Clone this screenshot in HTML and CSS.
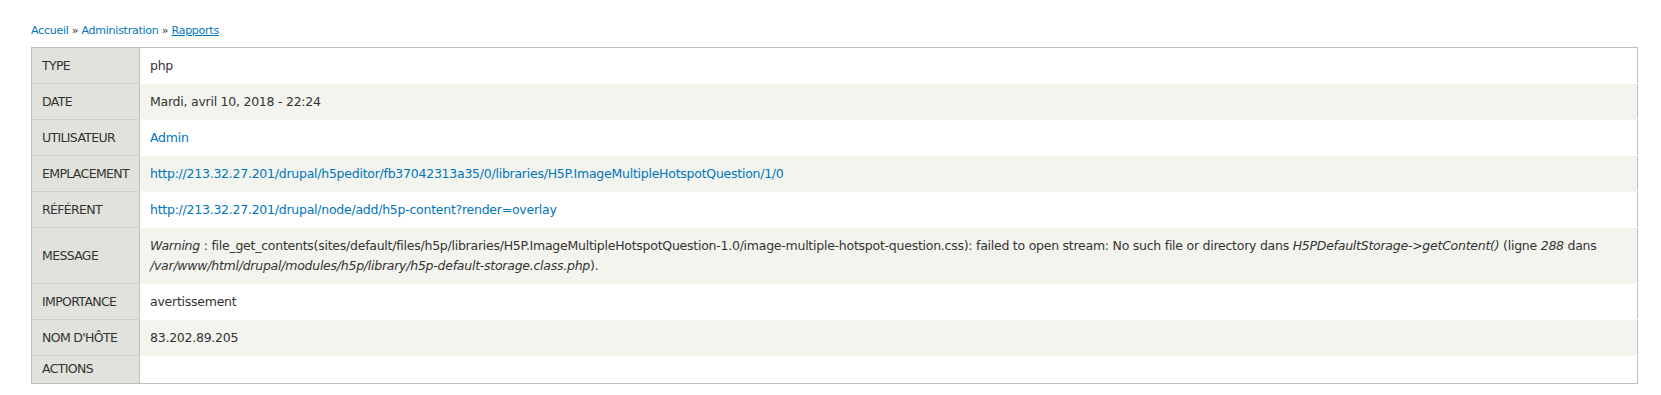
FILE: index.html
```html
<!doctype html>
<html lang="fr">
<head>
    <meta charset="utf-8">
    <title>Détails de l'événement</title>
    <link rel="stylesheet" href="styles.css">
</head>
<body>
<div class="page">

    <!-- fil d'ariane -->
    <div class="breadcrumb">
        <a href="#">Accueil</a> » <a href="#">Administration</a> » <a class="current" href="#">Rapports</a>
    </div>

    <!-- détails du message -->
    <table class="dblog-event">
        <tr>
            <th>TYPE</th>
            <td>php</td>
        </tr>
        <tr class="even">
            <th>DATE</th>
            <td>Mardi, avril 10, 2018 - 22:24</td>
        </tr>
        <tr>
            <th>UTILISATEUR</th>
            <td><a href="#">Admin</a></td>
        </tr>
        <tr class="even">
            <th>EMPLACEMENT</th>
            <td><a href="#">http://213.32.27.201/drupal/h5peditor/fb37042313a35/0/libraries/H5P.ImageMultipleHotspotQuestion/1/0</a></td>
        </tr>
        <tr>
            <th>RÉFÉRENT</th>
            <td><a href="#">http://213.32.27.201/drupal/node/add/h5p-content?render=overlay</a></td>
        </tr>
        <tr class="even">
            <th>MESSAGE</th>
            <td><em>Warning</em> : file_get_contents(sites/default/files/h5p/libraries/H5P.ImageMultipleHotspotQuestion-1.0/image-multiple-hotspot-question.css): failed to open stream: No such file or directory dans <em>H5PDefaultStorage-&gt;getContent()</em> (ligne <em>288</em> dans <em>/var/www/html/drupal/modules/h5p/library/h5p-default-storage.class.php</em>).</td>
        </tr>
        <tr>
            <th>IMPORTANCE</th>
            <td>avertissement</td>
        </tr>
        <tr class="even">
            <th>NOM D'HÔTE</th>
            <td>83.202.89.205</td>
        </tr>
        <tr class="last">
            <th>ACTIONS</th>
            <td></td>
        </tr>
    </table>
</div>
</body>
</html>
```

FILE: styles.css
```css
* {
    margin: 0;
    padding: 0;
}

html, body {
    background: #fff;
    font-family: "DejaVu Sans", "Liberation Sans", sans-serif;
    font-size: 12.5px;
    letter-spacing: -0.25px;
    color: #333;
}

a {
    color: #0074bd;
    text-decoration: none;
}

.page {
    padding: 23px 23px 12px 31px;
}

.breadcrumb {
    font-size: 11px;
    letter-spacing: -0.25px;
    line-height: 16px;
    color: #333;
    margin-bottom: 8px;
}

.breadcrumb .current {
    text-decoration: underline;
}

.dblog-event {
    width: 100%;
    border-collapse: collapse;
    border: 1px solid #bebfb9;
}

.dblog-event th,
.dblog-event td {
    line-height: 20px;
    padding: 8px 10px 7px;
    text-align: left;
    vertical-align: middle;
    border-bottom: 1px solid #fff;
}

.dblog-event th {
    width: 87px;
    font-weight: normal;
    letter-spacing: -0.65px;
    background: #e1e2dc;
    border-right: 1px solid #bebfb9;
    border-bottom: 1px solid #cfd0ca;
    white-space: nowrap;
}

.dblog-event tr.even td {
    background: #f3f4ee;
    border-bottom-color: #f3f4ee;
}

.dblog-event tr.last th,
.dblog-event tr.last td {
    padding-top: 3px;
    padding-bottom: 4px;
    border-bottom: none;
}
```
